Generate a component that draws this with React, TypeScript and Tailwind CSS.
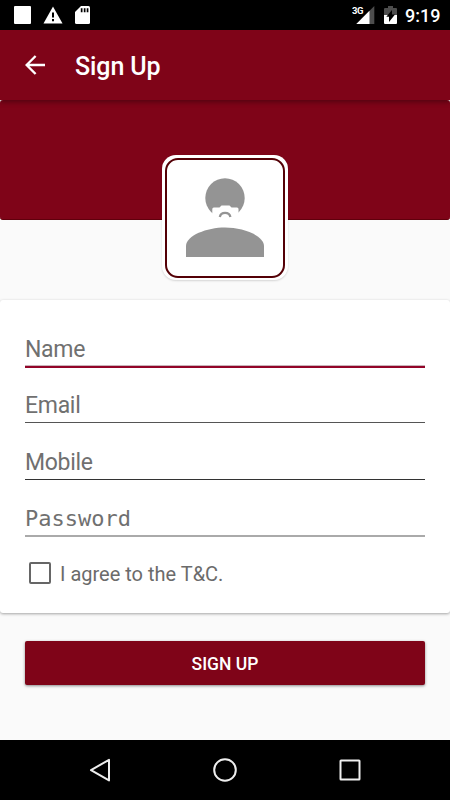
import { useState } from 'react';

interface FieldProps {
    label: string;
    type?: string;
    className?: string;
    lineClass: string;
}

function Field({ label, type = 'text', className = 'text-[23px] tracking-[-0.3px]', lineClass }: FieldProps) {
    return (
        <div className="h-[56.4px]">
            <div className="h-[38px] flex items-center">
                <input
                    type={type}
                    placeholder={label}
                    aria-label={label}
                    className={`w-full bg-transparent pt-[6px] outline-none leading-[30px] text-[#333] placeholder:text-[#707070] placeholder:opacity-100 ${className}`}
                />
            </div>
            <div className={lineClass} />
        </div>
    );
}

function StatusBar() {
    return (
        <div className="h-[30px] shrink-0 bg-black flex items-center justify-between pl-[14px] pr-[10px] text-white">
            <div className="flex items-center">
                <div className="w-[17px] h-[18px] rounded-[1px] bg-white" />
                <svg className="ml-3" width="20" height="18" viewBox="0 0 20 18">
                    <path d="M10 .5 19.5 17.5H.5Z" fill="#fff" />
                    <path d="M9 6.5h2v5H9zM9 13h2v2.2H9z" fill="#000" />
                </svg>
                <svg className="ml-3" width="16" height="18" viewBox="0 0 16 18">
                    <path d="M6 0h7.5Q15 0 15 1.5v15q0 1.5-1.5 1.5h-12Q0 18 0 16.5V6Z" fill="#fff" />
                    <path d="M5.8 2.2h1.7v4H5.8zM8.8 2.2h1.7v4H8.8zM11.7 2.2h1.7v4h-1.7z" fill="#000" />
                </svg>
            </div>
            <div className="flex items-center">
                <svg width="24" height="20" viewBox="0 0 24 20">
                    <path d="M22.3 1v18H4.3Z" fill="#4d4d4d" />
                    <path d="M17.5 5.8V19H4.3Z" fill="#fff" />
                    <path d="M0 0h11.5v9H0Z" fill="#000" />
                    <text x="0" y="8.8" fontFamily="Roboto, sans-serif" fontSize="9.5" fontWeight="700" fill="#fff" textLength="11.5">3G</text>
                </svg>
                <svg className="ml-2" width="13" height="20" viewBox="0 0 13 20">
                    <path d="M4 1h5v2h3q1 0 1 1v6H0V4q0-1 1-1h3Z" fill="#4d4d4d" />
                    <path d="M0 10h13v8q0 1-1 1H1q-1 0-1-1Z" fill="#fff" />
                    <path d="M8 5v4.5h3L5 17v-5.3H2.3Z" fill="#000" />
                </svg>
                <span className="ml-[8px] mt-[2px] w-[35px] text-[18px] leading-5 font-medium whitespace-nowrap">9:19</span>
            </div>
        </div>
    );
}

function Avatar() {
    return (
        <div className="w-[126px] h-[125px] rounded-[14px] bg-white p-[3px] shadow-[0_1px_2px_rgba(0,0,0,0.15)]">
            <div className="w-[120px] h-[120px] rounded-[13px] border-2 border-[#540006]">
                <svg width="116" height="116" viewBox="167 160 116 116">
                    <circle cx="225" cy="198" r="19.7" fill="#949494" />
                    <path d="M186 257v-11c0-10.5 21-18.5 39-18.5s39 8 39 18.5v11Z" fill="#949494" />
                    <path d="M212.3 221v-12q0-1.5 1.5-1.5h5.7l2-2h8l2 2h5.5q1.5 0 1.5 1.5v12Z" fill="#fff" />
                    <path d="M219.8 217a5.4 5 0 0 1 10.6 0" fill="none" stroke="#949494" strokeWidth="2.3" />
                </svg>
            </div>
        </div>
    );
}

function NavBar() {
    return (
        <div className="h-[60px] shrink-0 bg-black">
            <svg width="450" height="60" viewBox="0 740 450 60" fill="none" stroke="#eee" strokeWidth="2">
                <path d="M109 759.8v20.6L91 770.1Z" strokeLinejoin="round" />
                <circle cx="225" cy="770" r="10.8" />
                <rect x="340.5" y="760.5" width="19" height="19" rx="0.5" />
            </svg>
        </div>
    );
}

export default function App() {
    const [agreed, setAgreed] = useState(false);

    return (
        <div className="w-[450px] h-[800px] flex flex-col overflow-hidden bg-[#fafafa] font-[Roboto,sans-serif]">
            <StatusBar />

            {/* Toolbar */}
            <header className="relative z-10 h-[70px] shrink-0 bg-[#7f0418] flex items-center text-white shadow-[0_2px_5px_rgba(0,0,0,0.35)]">
                <svg className="ml-[25px]" width="20" height="20" viewBox="0 0 20 20" fill="none" stroke="#fff" strokeWidth="2.4">
                    <path d="M20 10H2M10.6 1 1.6 10l9 9" />
                </svg>
                <h1 className="ml-[30px] mt-[4px] text-[25px] leading-8 font-medium tracking-[-0.1px]">Sign Up</h1>
            </header>

            {/* Banner with the profile picture hanging over its lower edge */}
            <div className="h-[120px] shrink-0 rounded-[3px] bg-[#7f0418] border-b border-[#60000c] flex justify-center pt-[55px]">
                <Avatar />
            </div>

            <main className="flex-1 flex flex-col pt-20">
                <div className="h-[313px] rounded-[3px] bg-white px-[25px] pt-[28px] shadow-[0_1px_3px_rgba(0,0,0,0.35)]">
                    <Field label="Name" lineClass="h-[2px] bg-[#920428] shadow-[0_-1px_0_#c9b4ba]" />
                    <Field label="Email" lineClass="h-px bg-[#555]" />
                    <Field label="Mobile" lineClass="h-px bg-[#333]" />
                    <Field
                        label="Password"
                        type="password"
                        className="font-['DejaVu_Sans_Mono',monospace] text-[22px]"
                        lineClass="h-[2px] bg-[#aaa]"
                    />
                    <label className="flex items-center h-[38.4px] pl-1 text-[20px] text-[#6b6b6b]">
                        <input
                            type="checkbox"
                            checked={agreed}
                            onChange={(e) => setAgreed(e.target.checked)}
                            className="appearance-none w-[22px] h-[22px] rounded-[2px] border-2 border-[#666] checked:bg-[#920428]"
                        />
                        <span className="ml-[9px] mt-[2px]">I agree to the T&amp;C.</span>
                    </label>
                </div>

                <button className="mx-[25px] mt-[28px] h-[44px] rounded-[2px] bg-[#7f0418] pt-[2px] text-white text-[17.5px] font-medium shadow-[0_1px_3px_rgba(0,0,0,0.45)]">
                    SIGN UP
                </button>
            </main>

            <NavBar />
        </div>
    );
}
